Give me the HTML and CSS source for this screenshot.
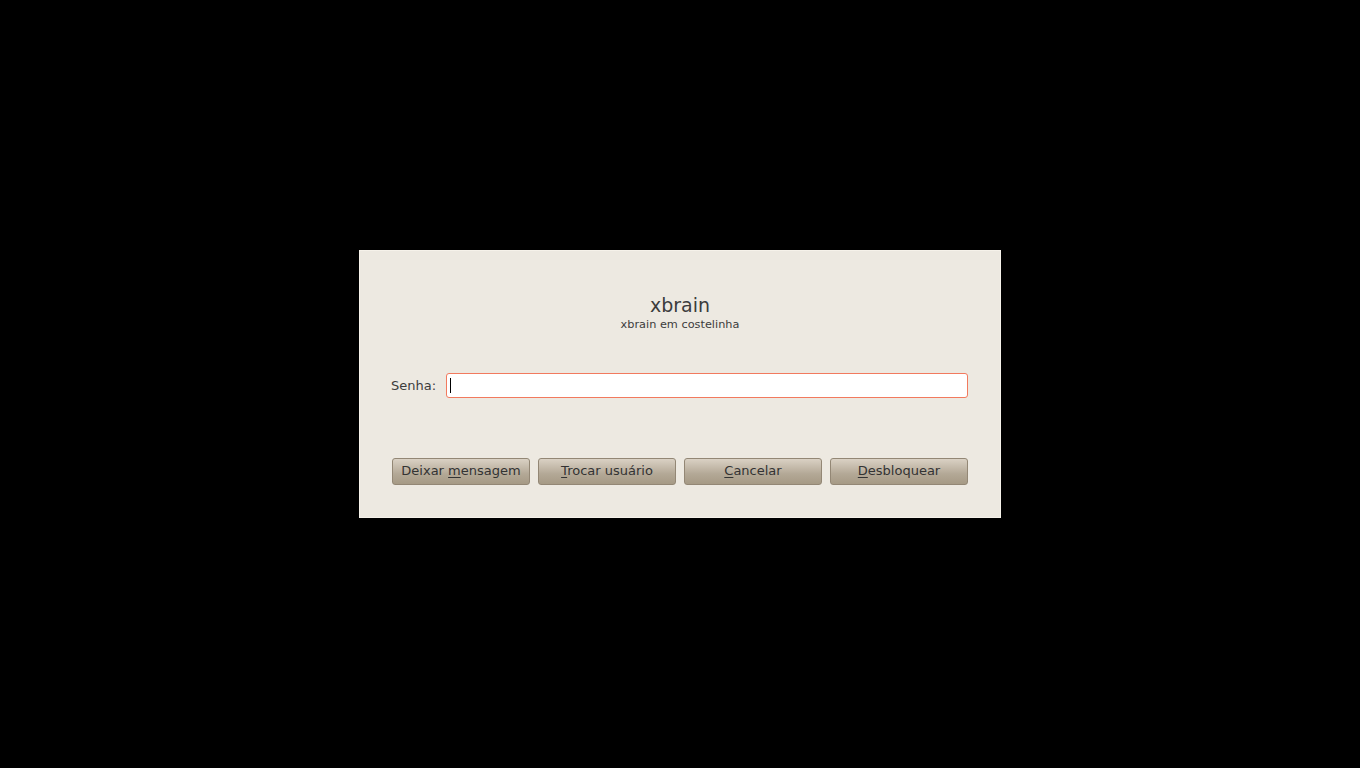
FILE: index.html
```html
<!DOCTYPE html>
<html>
<head>
<meta charset="utf-8">
<link rel="stylesheet" href="styles.css">
</head>
<body>
<div class="screen">
  <div class="dialog">
    <div class="header">
      <div class="title">xbrain</div>
      <div class="subtitle">xbrain em costelinha</div>
    </div>
    <div class="field">
      <label class="label">Senha:</label>
      <div class="entry"><span class="caret"></span></div>
    </div>
    <div class="buttons">
      <div class="btn"><span>Deixar <u>m</u>ensagem</span></div>
      <div class="btn"><span><u>T</u>rocar usuário</span></div>
      <div class="btn"><span><u>C</u>ancelar</span></div>
      <div class="btn"><span><u>D</u>esbloquear</span></div>
    </div>
  </div>
</div>
</body>
</html>
```
FILE: styles.css
```css
html, body {
  margin: 0;
  padding: 0;
  background: #000;
}
.screen {
  width: 1360px;
  height: 768px;
  display: flex;
  align-items: center;
  justify-content: center;
}
.dialog {
  box-sizing: border-box;
  width: 642px;
  height: 268px;
  background: #ede9e1;
  border: 1px solid #f6f2ea;
  padding: 43px 32px 0 32px;
  font-family: "DejaVu Sans", sans-serif;
  color: #3c3c3c;
  display: flex;
  flex-direction: column;
}
.header {
  display: flex;
  flex-direction: column;
  align-items: center;
}
.title {
  font-size: 19px;
  line-height: 22px;
}
.subtitle {
  font-size: 11.3px;
  line-height: 14px;
  margin-top: 2px;
}
.field {
  margin-top: 41px;
  display: flex;
  align-items: center;
  gap: 10px;
}
.label {
  font-size: 13px;
  margin-left: -1px;
  width: 45px;
}
.entry {
  flex: 1;
  height: 25px;
  box-sizing: border-box;
  background: #fff;
  border: 1px solid #f27a5e;
  border-radius: 3px;
  display: flex;
  align-items: center;
  padding-left: 3px;
}
.caret {
  width: 1px;
  height: 15px;
  background: #000;
}
.buttons {
  margin-top: 60px;
  display: flex;
  gap: 8px;
}
.btn {
  width: 138px;
  height: 27px;
  box-sizing: border-box;
  border: 1px solid #938775;
  border-radius: 3px;
  background: linear-gradient(#dad1c4, #b3a896 60%, #a69a85);
  display: flex;
  align-items: center;
  justify-content: center;
  padding-bottom: 2px;
  font-size: 13px;
  color: #333;
}
.btn u {
  text-decoration-thickness: 1px;
  text-underline-offset: 2px;
}
```
